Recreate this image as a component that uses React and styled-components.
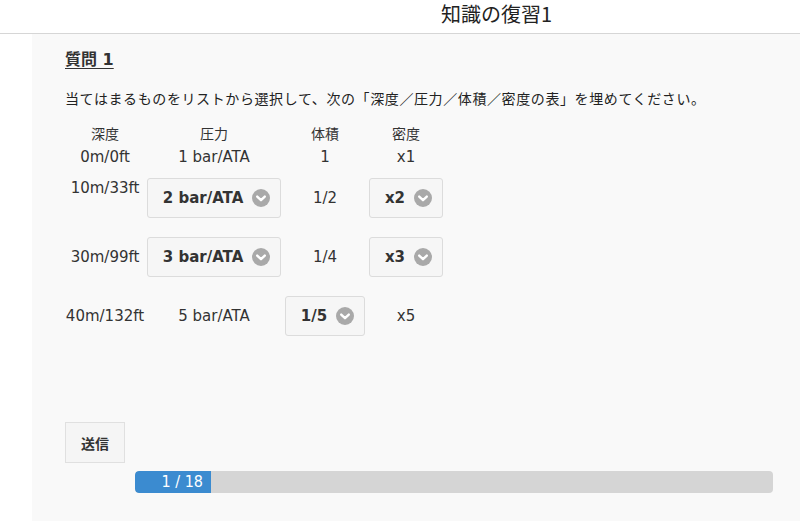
import React from 'react';
import styled, { createGlobalStyle } from 'styled-components';

const GlobalStyle = createGlobalStyle`
  html, body {
    margin: 0;
    padding: 0;
    background: #fff;
  }
  body {
    font-family: "DejaVu Sans", "Noto Sans CJK JP", sans-serif;
    color: #333;
  }
`;

const rows = [
  { depth: '10m/33ft', pressure: '2 bar/ATA', volume: '1/2', density: 'x2', top: true, sel: ['pressure', 'density'] },
  { depth: '30m/99ft', pressure: '3 bar/ATA', volume: '1/4', density: 'x3', sel: ['pressure', 'density'] },
  { depth: '40m/132ft', pressure: '5 bar/ATA', volume: '1/5', density: 'x5', sel: ['volume'] },
];

const Chevron = () => (
  <svg width="18" height="18" viewBox="0 0 18 18">
    <circle cx="9" cy="9" r="9" fill="#a9a9a9" />
    <path d="M5.2 7.6 L9 11.2 L12.8 7.6" fill="none" stroke="#fff" strokeWidth="2.4" strokeLinecap="round" strokeLinejoin="round" />
  </svg>
);

const Select = ({ value }) => (
  <SelectBox>
    <span>{value}</span>
    <Chevron />
  </SelectBox>
);

const App = () => {
  const cell = (row, key) =>
    row.sel.includes(key) ? <Select value={row[key]} /> : row[key];

  return (
    <>
      <GlobalStyle />
      <Header>
        <Title>知識の復習1</Title>
      </Header>
      <Body>
        <Gutter />
        <Panel>
          <QuestionTitle>質問 1</QuestionTitle>
          <Instruction>
            当てはまるものをリストから選択して、次の「深度／圧力／体積／密度の表」を埋めてください。
          </Instruction>
          <Table>
            <colgroup>
              <col style={{ width: 80 }} />
              <col style={{ width: 138 }} />
              <col style={{ width: 84 }} />
              <col style={{ width: 78 }} />
            </colgroup>
            <thead>
              <tr>
                <Head>深度</Head>
                <Head>圧力</Head>
                <Head>体積</Head>
                <Head>密度</Head>
              </tr>
            </thead>
            <tbody>
              <tr>
                <Plain>0m/0ft</Plain>
                <Plain>1 bar/ATA</Plain>
                <Plain>1</Plain>
                <Plain>x1</Plain>
              </tr>
              {rows.map((row) => (
                <tr key={row.depth}>
                  <Cell top={row.top ? 1 : 0}>{row.depth}</Cell>
                  <Cell>{cell(row, 'pressure')}</Cell>
                  <Cell>{cell(row, 'volume')}</Cell>
                  <Cell>{cell(row, 'density')}</Cell>
                </tr>
              ))}
            </tbody>
          </Table>
          <SubmitButton>送信</SubmitButton>
          <Progress>
            <ProgressFill style={{ width: `${(76 / 638) * 100}%` }}>1 / 18</ProgressFill>
          </Progress>
        </Panel>
      </Body>
    </>
  );
};

export default App;

const Header = styled.div`
  height: 34px;
  box-sizing: border-box;
  border-bottom: 1px solid #d6d6d6;
  padding-left: 441px;
`;

const Title = styled.h1`
  margin: 0;
  font-family: "Noto Sans CJK JP", sans-serif;
  font-weight: 400;
  font-size: 20px;
  line-height: 27px;
  color: #222;
`;

const Body = styled.div`
  display: flex;
`;

const Gutter = styled.div`
  width: 32px;
  flex-shrink: 0;
`;

const Panel = styled.div`
  flex: 1;
  background: #f9f9f9;
  min-height: 487px;
  box-sizing: border-box;
  padding: 14px 27px 0 33px;
`;

const QuestionTitle = styled.h2`
  margin: 0;
  font-size: 16px;
  line-height: 24px;
  font-weight: bold;
  text-decoration: underline;
  text-underline-offset: 3px;
  color: #333;
`;

const Instruction = styled.p`
  margin: 15px 0 0;
  font-family: "Noto Sans CJK JP", sans-serif;
  font-size: 14px;
  letter-spacing: 0.6px;
  line-height: 22px;
  color: #222;
`;

const Table = styled.table`
  margin-top: 12px;
  border-collapse: collapse;
  table-layout: fixed;
  font-size: 15px;
  color: #333;
`;

const Head = styled.th`
  font-weight: normal;
  font-family: "Noto Sans CJK JP", sans-serif;
  font-size: 14px;
  text-align: center;
  padding: 0;
  height: 24px;
  line-height: 24px;
`;

const Plain = styled.td`
  text-align: center;
  padding: 0;
  height: 24px;
  line-height: 24px;
`;

const Cell = styled.td`
  text-align: center;
  vertical-align: ${(p) => (p.top ? 'top' : 'middle')};
  padding: 9px 0 10px;
  line-height: 20px;
  white-space: nowrap;
`;

const SelectBox = styled.div`
  display: inline-flex;
  align-items: center;
  gap: 9px;
  height: 40px;
  box-sizing: border-box;
  padding: 0 10px 0 15px;
  border: 1px solid #dcdcdc;
  border-radius: 3px;
  background: #f6f6f6;
  font-weight: bold;
  font-size: 15px;
  color: #333;
  vertical-align: middle;

  svg {
    flex-shrink: 0;
  }
`;

const SubmitButton = styled.button`
  display: block;
  margin-top: 76px;
  width: 60px;
  height: 41px;
  border: 1px solid #e0e0e0;
  background: #f5f5f5;
  font-family: "Noto Sans CJK JP", sans-serif;
  font-weight: bold;
  font-size: 14px;
  color: #333;
  padding: 0;
`;

const Progress = styled.div`
  margin: 8px 0 0 70px;
  height: 22px;
  border-radius: 4px;
  background: #d5d5d5;
  overflow: hidden;
`;

const ProgressFill = styled.div`
  height: 100%;
  background: #3b8bd0;
  color: #fff;
  font-family: "DejaVu Sans Condensed", "Noto Sans CJK JP", sans-serif;
  font-size: 16px;
  line-height: 22px;
  text-align: right;
  padding-right: 8px;
  box-sizing: border-box;
  border-radius: 4px 0 0 4px;
`;
